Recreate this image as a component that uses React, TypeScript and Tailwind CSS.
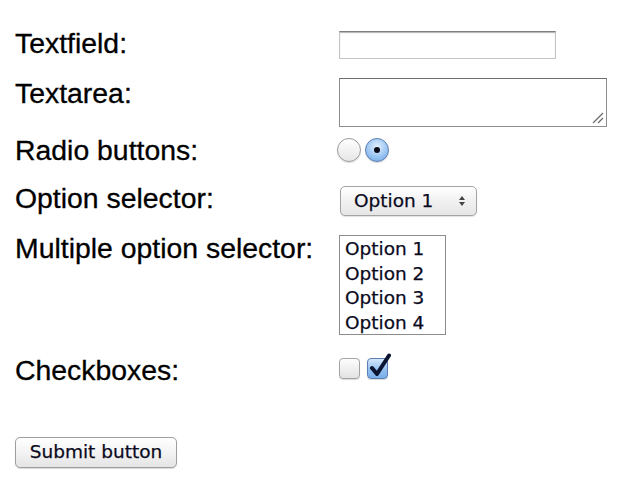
import React from "react";

const lucida = "font-['DejaVu_Sans',Verdana,sans-serif] [-webkit-text-stroke:0.25px_#0a0a1e]";

function Label({ children }: { children: React.ReactNode }) {
  return <div className="w-[324px] shrink-0">{children}</div>;
}

export default function App() {
  return (
    <div className="bg-white w-[634px] h-[502px] pl-[15px] pt-[27px] font-['Liberation_Sans',Arial,sans-serif] text-[28.4px] leading-[32px] text-black [-webkit-text-stroke:0.3px_#000]">
      {/* Textfield */}
      <div className="flex h-[50px]">
        <Label>Textfield:</Label>
        <input
          type="text"
          className="appearance-none mt-[4px] w-[217px] h-[28px] border border-[#c4c4c4] border-t-[#7e7e7e] shadow-[inset_0_1px_1px_rgba(0,0,0,0.3)] bg-white outline-none"
        />
      </div>
      {/* Textarea */}
      <div className="flex h-[57px]">
        <Label>Textarea:</Label>
        <div className="relative w-[268px] h-[49px] mt-[1px]">
          <textarea className="w-full h-full resize-none border border-[#8c8c8c] border-t-[#6e6e6e] bg-white outline-none block" />
          <svg className="absolute right-[3px] bottom-[3px]" width="12" height="12" viewBox="0 0 12 12">
            <line x1="1" y1="11" x2="11" y2="1" stroke="#6a6a6a" strokeWidth="1.2" />
            <line x1="6" y1="11" x2="11" y2="6" stroke="#6a6a6a" strokeWidth="1.2" />
          </svg>
        </div>
      </div>
      {/* Radios */}
      <div className="flex h-[48px]">
        <Label>Radio buttons:</Label>
        <div className="flex gap-[4px] mt-[4px] -ml-[2px]">
          <div className="w-[24px] h-[24px] rounded-full border border-[#9b9b9b] bg-[linear-gradient(#ffffff,#e6e6e6)] shadow-[0_1px_1px_rgba(0,0,0,0.15)]" />
          <div className="w-[24px] h-[24px] rounded-full border border-[#5b7eb0] bg-[radial-gradient(circle_at_50%_35%,#e4f1ff,#9cc6f2_55%,#6aa3e4)] shadow-[0_1px_1px_rgba(0,0,0,0.15)] flex items-center justify-center">
            <div className="w-[6px] h-[6px] rounded-full bg-[#0b0b1a]" />
          </div>
        </div>
      </div>
      {/* Select */}
      <div className="flex h-[50px]">
        <Label>Option selector:</Label>
        <div
          className={`mt-[4px] ml-[1px] w-[137px] h-[30px] rounded-[5px] border border-[#a3a3a3] bg-[linear-gradient(#ffffff,#f1f1f1_50%,#e6e6e6)] shadow-[0_1px_1px_rgba(0,0,0,0.12)] flex items-center pl-[13px] pr-[10px] ${lucida} text-[18.5px] leading-none text-[#0a0a1e]`}
        >
          <span className="flex-1">Option 1</span>
          <svg width="8" height="12" viewBox="0 0 8 12">
            <path d="M4 1 L7 5 L1 5 Z" fill="#444" />
            <path d="M4 11 L7 7 L1 7 Z" fill="#444" />
          </svg>
        </div>
      </div>
      {/* Multiple select */}
      <div className="flex h-[122px]">
        <Label>Multiple option selector:</Label>
        <div
          className={`mt-[3px] w-[107px] h-[100px] border border-[#8c8c8c] bg-white pl-[5px] pt-[1px] ${lucida} text-[18.5px] leading-[24.5px] text-[#0a0a1e]`}
        >
          <div>Option 1</div>
          <div>Option 2</div>
          <div>Option 3</div>
          <div>Option 4</div>
        </div>
      </div>
      {/* Checkboxes */}
      <div className="flex h-[83px]">
        <Label>Checkboxes:</Label>
        <div className="flex gap-[7px] mt-[4px]">
          <div className="w-[21px] h-[21px] rounded-[4px] border border-[#a3a3a3] bg-[linear-gradient(#fdfdfd,#e3e3e3)] shadow-[0_1px_1px_rgba(0,0,0,0.15)]" />
          <div className="relative w-[21px] h-[21px] rounded-[4px] border border-[#5b7eb0] bg-[linear-gradient(#d5e8fd,#8fbdf0_60%,#7aaee8)] shadow-[0_1px_1px_rgba(0,0,0,0.15)]">
            <svg className="absolute left-[1px] -top-[6px]" width="22" height="25" viewBox="0 0 22 25">
              <path d="M3 15 L8 21 L20 2.5" fill="none" stroke="#0b1430" strokeWidth="4" strokeLinecap="round" strokeLinejoin="round" />
            </svg>
          </div>
        </div>
      </div>
      {/* Submit */}
      <button
        className={`block w-[162px] h-[31px] rounded-[5px] border border-[#9e9e9e] bg-[linear-gradient(#ffffff,#f3f3f3_50%,#e4e4e4)] shadow-[0_1px_1px_rgba(0,0,0,0.15)] ${lucida} text-[18.5px] leading-none text-[#0a0a1e]`}
      >
        Submit button
      </button>
    </div>
  );
}
